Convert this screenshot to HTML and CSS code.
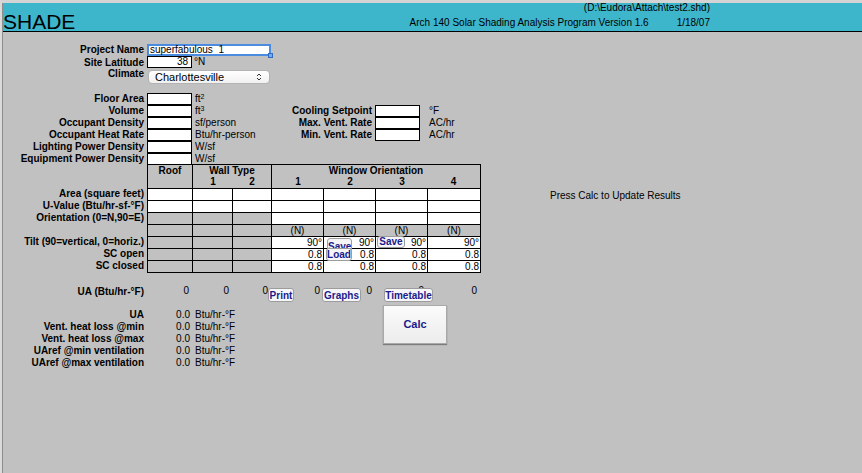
FILE: index.html
```html
<!DOCTYPE html>
<html>
<head>
<meta charset="utf-8">
<title>SHADE</title>
<link rel="stylesheet" href="styles.css">
</head>
<body>
<div class="app">
 <div class="frame">
  <header class="topbar">
    <div class="title">SHADE</div>
    <div class="meta">
      <div class="path">(D:\Eudora\Attach\test2.shd)</div>
      <div class="prog"><span>Arch 140 Solar Shading Analysis Program Version 1.6</span><span class="date">1/18/07</span></div>
    </div>
  </header>

  <main class="content">
    <section class="project">
      <div class="lbl">Project Name</div>
      <div><div class="focusbox">superfabulous&nbsp; 1<span class="handle"></span></div></div>
      <div class="lbl">Site Latitude</div>
      <div class="latrow"><div class="box num">38</div><span class="unit-lat">°N</span></div>
      <div class="lbl">Climate</div>
      <div><div class="select">Charlottesville<svg class="arrows" width="6" height="10" viewBox="0 0 6 10"><path d="M1 4 L3 2 L5 4" fill="none" stroke="#333" stroke-width="1"/><path d="M1 6 L3 8 L5 6" fill="none" stroke="#333" stroke-width="1"/></svg></div></div>
    </section>

    <section class="loads">
      <div class="lbl">Floor Area</div><div class="box"></div><div class="unit">ft<sup>2</sup></div><div class="sp3"></div>
      <div class="lbl">Volume</div><div class="box"></div><div class="unit">ft<sup>3</sup></div>
      <div class="lbl rlbl">Cooling Setpoint</div><div class="box"></div><div class="unit2">°F</div>
      <div class="lbl">Occupant Density</div><div class="box"></div><div class="unit">sf/person</div>
      <div class="lbl rlbl">Max. Vent. Rate</div><div class="box"></div><div class="unit2">AC/hr</div>
      <div class="lbl">Occupant Heat Rate</div><div class="box"></div><div class="unit">Btu/hr-person</div>
      <div class="lbl rlbl">Min. Vent. Rate</div><div class="box"></div><div class="unit2">AC/hr</div>
      <div class="lbl">Lighting Power Density</div><div class="box"></div><div class="unit">W/sf</div><div class="sp3"></div>
      <div class="lbl">Equipment Power Density</div><div class="box"></div><div class="unit">W/sf</div><div class="sp3"></div>
    </section>

    <section class="envelope">
      <div class="rowlabels">
        <div class="lbl">Area (square feet)</div>
        <div class="lbl">U-Value (Btu/hr-sf-°F)</div>
        <div class="lbl">Orientation (0=N,90=E)</div>
        <div class="lbl"></div>
        <div class="lbl">Tilt (90=vertical, 0=horiz.)</div>
        <div class="lbl">SC open</div>
        <div class="lbl">SC closed</div>
      </div>
      <div class="tablewrap">
        <div class="grid">
          <div class="hd roofhd">Roof</div>
          <div class="hd wallhd"><div class="hl">Wall Type</div><div class="sub2"><span>1</span><span>2</span></div></div>
          <div class="hd winhd"><div class="hl">Window Orientation</div><div class="sub4"><span>1</span><span>2</span><span>3</span><span>4</span></div></div>

          <div class="w"></div><div class="w"></div><div class="w"></div><div class="w"></div><div class="w"></div><div class="w"></div><div class="w"></div>
          <div class="w"></div><div class="w"></div><div class="w"></div><div class="w"></div><div class="w"></div><div class="w"></div><div class="w"></div>
          <div class="g"></div><div class="g"></div><div class="g"></div><div class="w"></div><div class="w"></div><div class="w"></div><div class="w"></div>
          <div class="g"></div><div class="g"></div><div class="g"></div><div class="g ctr">(N)</div><div class="g ctr">(N)</div><div class="g ctr">(N)</div><div class="g ctr">(N)</div>
          <div class="g"></div><div class="g"></div><div class="g"></div><div class="w rt">90°</div><div class="w rt">90°</div><div class="w rt">90°</div><div class="w rt">90°</div>
          <div class="g"></div><div class="g"></div><div class="g"></div><div class="w rt">0.8</div><div class="w rt">0.8</div><div class="w rt">0.8</div><div class="w rt">0.8</div>
          <div class="g"></div><div class="g"></div><div class="g"></div><div class="w rt">0.8</div><div class="w rt">0.8</div><div class="w rt">0.8</div><div class="w rt">0.8</div>
        </div>
        <div class="btn save1">Save</div>
        <div class="btn load">Load</div>
        <div class="btn save2">Save</div>
      </div>
      <div class="message">Press Calc to Update Results</div>
    </section>

    <section class="uarow">
      <div class="lbl">UA (Btu/hr-°F)</div>
      <div class="z">0</div><div class="z">0</div><div class="z">0</div><div class="z">0</div><div class="z">0</div><div class="z">0</div><div class="z">0</div>
      <div class="btn print">Print</div>
      <div class="btn graphs">Graphs</div>
      <div class="btn timetable">Timetable</div>
    </section>

    <section class="results">
      <div class="lbl">UA</div><div class="val">0.0</div><div class="runit">Btu/hr-°F</div>
      <div class="calc">Calc</div>
      <div class="lbl">Vent. heat loss @min</div><div class="val">0.0</div><div class="runit">Btu/hr-°F</div>
      <div class="lbl">Vent. heat loss @max</div><div class="val">0.0</div><div class="runit">Btu/hr-°F</div>
      <div class="lbl">UAref @min ventilation</div><div class="val">0.0</div><div class="runit">Btu/hr-°F</div>
      <div class="lbl">UAref @max ventilation</div><div class="val">0.0</div><div class="runit">Btu/hr-°F</div>
    </section>
  </main>
 </div>
</div>
</body>
</html>
```

FILE: styles.css
```css
* { box-sizing: border-box; }
html, body { margin: 0; padding: 0; }
body {
  background: #c1c1c1;
  font-family: "Liberation Sans", Arial, sans-serif;
  font-size: 10px;
  color: #000;
  width: 862px;
  height: 473px;
  overflow: hidden;
}
.app {
  height: 473px;
  border-top: 3px solid #d4d4d4;
  border-left: 2px solid #dadada;
}
.frame {
  height: 100%;
  border-left: 1px solid #8d8d8d;
}

/* header */
.topbar {
  height: 29px;
  background: #3db6cc;
  border-bottom: 1px solid #000;
  display: flex;
}
.title {
  font-size: 21px;
  line-height: 20px;
  padding-top: 9px;
  white-space: nowrap;
}
.meta {
  margin-left: auto;
  margin-right: 152px;
  text-align: right;
  white-space: nowrap;
}
.path { line-height: 10px; }
.prog { line-height: 10px; margin-top: 5px; }
.date { margin-left: 28px; }

/* content */
.content { padding-top: 12px; }
.lbl {
  font-weight: bold;
  text-align: right;
  padding-right: 3px;
  white-space: nowrap;
  line-height: 12px;
  height: 12px;
}

.project {
  display: grid;
  grid-template-columns: 144px 1fr;
  grid-template-rows: 12px 12px 16px;
}
.focusbox {
  position: relative;
  width: 124px;
  height: 12px;
  border: 2px solid #4b8be0;
  background: #fff;
  line-height: 8px;
  padding-left: 1px;
  white-space: nowrap;
}
.handle {
  position: absolute;
  right: -4px;
  bottom: -4px;
  width: 5px;
  height: 5px;
  background: #79a9ea;
  border: 1px solid #2f6cc4;
}
.latrow { display: flex; }
.box {
  width: 45px;
  height: 12px;
  border: 1px solid #000;
  background: #fff;
  line-height: 10px;
}
.num { text-align: right; padding-right: 3px; }
.unit-lat { padding-left: 2px; line-height: 12px; }
.project .lbl:nth-of-type(3) { line-height: 14px; }
.select {
  position: relative;
  margin-top: 2px;
  width: 122px;
  height: 14px;
  border: 1px solid #b3b3b3;
  border-radius: 4px;
  background: linear-gradient(#ffffff, #f1f1f1);
  font-size: 11px;
  line-height: 12px;
  padding-left: 6px;
  margin-left: 1px;
}
.arrows {
  position: absolute;
  right: 7px;
  top: 1px;
}

.loads {
  margin-top: 9px;
  display: grid;
  grid-template-columns: 144px 45px 80px 103px 52px 1fr;
  grid-template-rows: repeat(6, 12px);
}
.unit { padding-left: 3px; line-height: 12px; white-space: nowrap; }
.unit2 { padding-left: 2px; line-height: 12px; white-space: nowrap; }
.sp3 { grid-column: span 3; }
sup { font-size: 7px; line-height: 0; vertical-align: 3px; }

/* envelope table */
.envelope {
  margin-top: -1px;
  display: flex;
  align-items: flex-start;
}
.rowlabels { width: 144px; padding-top: 24px; }
.tablewrap { position: relative; }
.grid {
  display: grid;
  grid-template-columns: 44px 39px 38px 51px 51px 51px 52px;
  grid-template-rows: repeat(9, 11px);
  gap: 1px;
  background: #000;
  border: 1px solid #000;
}
.grid > div { line-height: 11px; white-space: nowrap; }
.w { background: #fff; }
.g { background: #c1c1c1; }
.ctr { text-align: center; }
.rt { text-align: right; padding-right: 1px; }
.hd {
  background: #c1c1c1;
  font-weight: bold;
  text-align: center;
  grid-row: span 2;
}
.roofhd { grid-column: span 1; }
.wallhd { grid-column: span 2; }
.winhd { grid-column: span 4; }
.hl { line-height: 11px; }
.sub2, .sub4 { display: grid; line-height: 12px; }
.sub2 { grid-template-columns: 40px 38px; }
.sub4 { grid-template-columns: 52px 52px 52px 51px; }
.message { margin-left: 69px; padding-top: 26px; line-height: 12px; white-space: nowrap; }

.btn {
  position: absolute;
  background: #f6f6f8;
  border: 1px solid #9c9c9c;
  border-radius: 3px;
  color: #1b1b8c;
  font-weight: bold;
  font-size: 10px;
  text-align: center;
  white-space: nowrap;
}
.save1 { left: 180px; top: 74px; width: 25px; height: 14px; line-height: 16px; overflow: hidden; }
.load { left: 179px; top: 84px; width: 26px; height: 13px; line-height: 12px; z-index: 2; }
.save2 { left: 230px; top: 72px; width: 28px; height: 12px; line-height: 10px; }

/* UA row */
.uarow {
  position: relative;
  margin-top: 13px;
  display: grid;
  grid-template-columns: 144px 45px 40px 39px 52px 52px 52px 53px;
  grid-template-rows: 12px;
}
.uarow .lbl { line-height: 12px; }
.z { text-align: right; padding-right: 3px; line-height: 10px; }
.print { left: 265px; top: 2px; width: 26px; height: 14px; line-height: 13px; }
.graphs { left: 319px; top: 2px; width: 39px; height: 14px; line-height: 13px; }
.timetable { left: 381px; top: 2px; width: 49px; height: 14px; line-height: 13px; }

/* results */
.results {
  margin-top: 11px;
  display: grid;
  grid-template-columns: 144px 45px 183px 52px 1fr;
  grid-template-rows: repeat(5, 12px);
}
.val { text-align: right; padding-right: 2px; line-height: 12px; }
.runit { padding-left: 3px; line-height: 12px; white-space: nowrap; }
.calc {
  grid-column: 4 / span 2;
  grid-row: 1 / span 4;
  align-self: start;
  justify-self: start;
  margin-left: 8px;
  margin-top: -4px;
  width: 64px;
  height: 39px;
  background: linear-gradient(#fbfbfb, #ececec);
  border: 1px solid #a9a9a9;
  box-shadow: 0 1px 1px rgba(0,0,0,0.35);
  color: #1b1b8c;
  font-weight: bold;
  font-size: 11px;
  line-height: 37px;
  text-align: center;
}
```
